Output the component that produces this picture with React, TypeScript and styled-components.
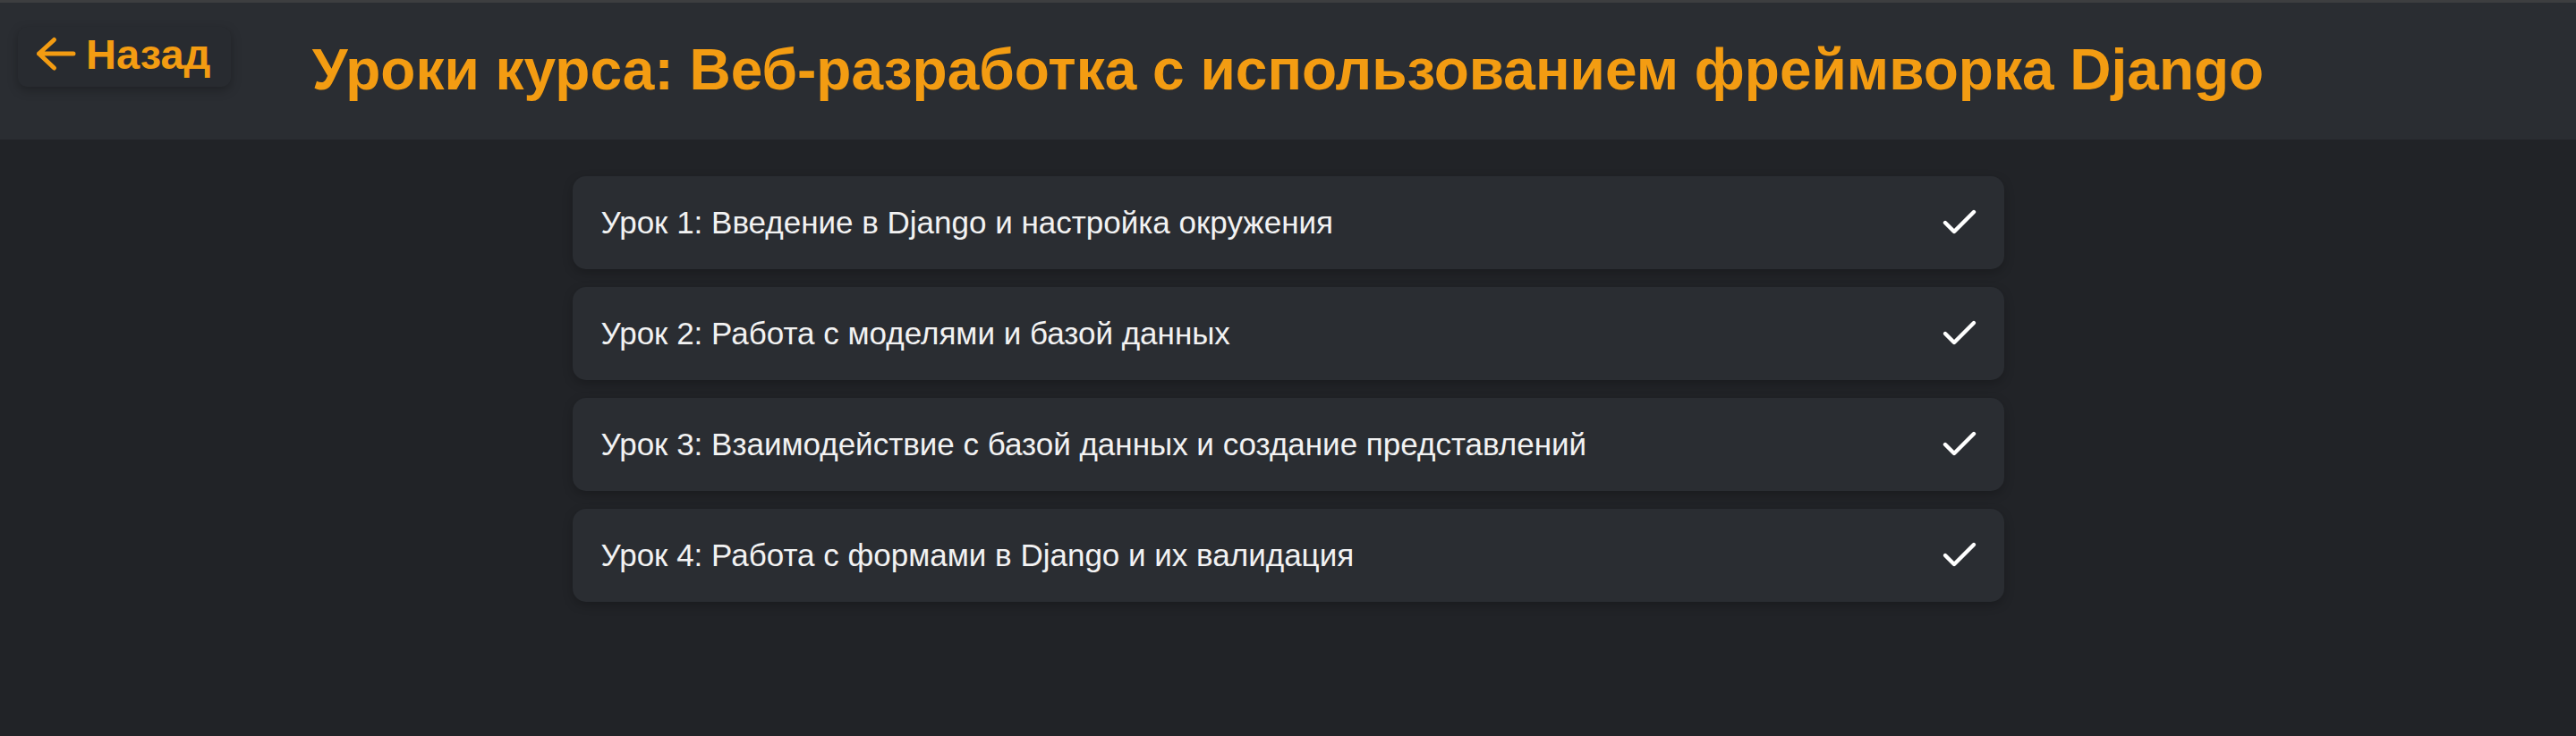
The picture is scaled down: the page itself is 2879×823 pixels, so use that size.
import React from "react";
import styled, { createGlobalStyle } from "styled-components";

const GlobalStyle = createGlobalStyle`
  html, body {
    margin: 0;
    padding: 0;
    background: #212327;
  }
  body {
    font-family: "Liberation Sans", Arial, sans-serif;
    min-height: 823px;
  }
  * { box-sizing: border-box; }
`;

const Page = styled.div`
  min-height: 823px;
  background: #212327;
  display: flex;
  flex-direction: column;
`;

const Header = styled.header`
  border-top: 3px solid #3d3e40;
  height: 156px;
  background: #2a2d32;
  display: grid;
  grid-template-columns: 1fr auto 1fr;
  align-items: center;
`;

const BackButton = styled.button`
  justify-self: start;
  align-self: start;
  margin: 27px 0 0 20px;
  width: 238px;
  height: 67px;
  padding: 0 0 7px 19px;
  display: flex;
  align-items: center;
  gap: 11px;
  border: none;
  border-radius: 10px;
  background: #282b30;
  box-shadow: 0 4px 12px rgba(0, 0, 0, 0.25);
  color: #f39c12;
  font-family: "Liberation Sans", Arial, sans-serif;
  font-weight: 700;
  font-size: 47px;
  line-height: 1;
  cursor: pointer;
`;

const Title = styled.h1`
  margin: 0;
  color: #f39c12;
  font-family: "Liberation Sans", Arial, sans-serif;
  font-weight: 700;
  font-size: 64px;
  line-height: 1;
  white-space: nowrap;
  padding-bottom: 4px;
`;

const Main = styled.main`
  display: flex;
  justify-content: center;
  padding-top: 41px;
`;

const LessonList = styled.ul`
  list-style: none;
  margin: 0;
  padding: 0;
  width: 1600px;
  display: flex;
  flex-direction: column;
  gap: 20px;
`;

const LessonCard = styled.li`
  height: 104px;
  display: flex;
  align-items: center;
  justify-content: space-between;
  padding: 0 26px 0 32px;
  background: #2a2d32;
  border-radius: 15px;
  box-shadow: 0 4px 12px rgba(0, 0, 0, 0.22);
  color: #f2f2f2;
  font-size: 35px;
`;

const LessonTitle = styled.span`
  white-space: nowrap;
`;

const ArrowIcon = () => (
  <svg width="46" height="40" viewBox="0 0 46 40" fill="none" aria-hidden="true">
    <path
      d="M4.5 20H43M4.5 20L21.5 4.5M4.5 20L21.5 36"
      stroke="#f39c12"
      strokeWidth="5"
      strokeLinecap="round"
      strokeLinejoin="round"
    />
  </svg>
);

const CheckIcon = () => (
  <svg width="48" height="48" viewBox="0 0 24 24" fill="none" aria-hidden="true">
    <path
      d="M20 6 9 17l-5-5"
      stroke="#ffffff"
      strokeWidth="2.2"
      strokeLinecap="round"
      strokeLinejoin="round"
    />
  </svg>
);

const lessons = [
  "Урок 1: Введение в Django и настройка окружения",
  "Урок 2: Работа с моделями и базой данных",
  "Урок 3: Взаимодействие с базой данных и создание представлений",
  "Урок 4: Работа с формами в Django и их валидация",
];

export default function App() {
  return (
    <>
      <GlobalStyle />
      <Page>
        <Header>
          <BackButton>
            <ArrowIcon />
            <span>Назад</span>
          </BackButton>
          <Title>Уроки курса: Веб-разработка с использованием фреймворка Django</Title>
        </Header>
        <Main>
          <LessonList>
            {lessons.map((l) => (
              <LessonCard key={l}>
                <LessonTitle>{l}</LessonTitle>
                <CheckIcon />
              </LessonCard>
            ))}
          </LessonList>
        </Main>
      </Page>
    </>
  );
}
